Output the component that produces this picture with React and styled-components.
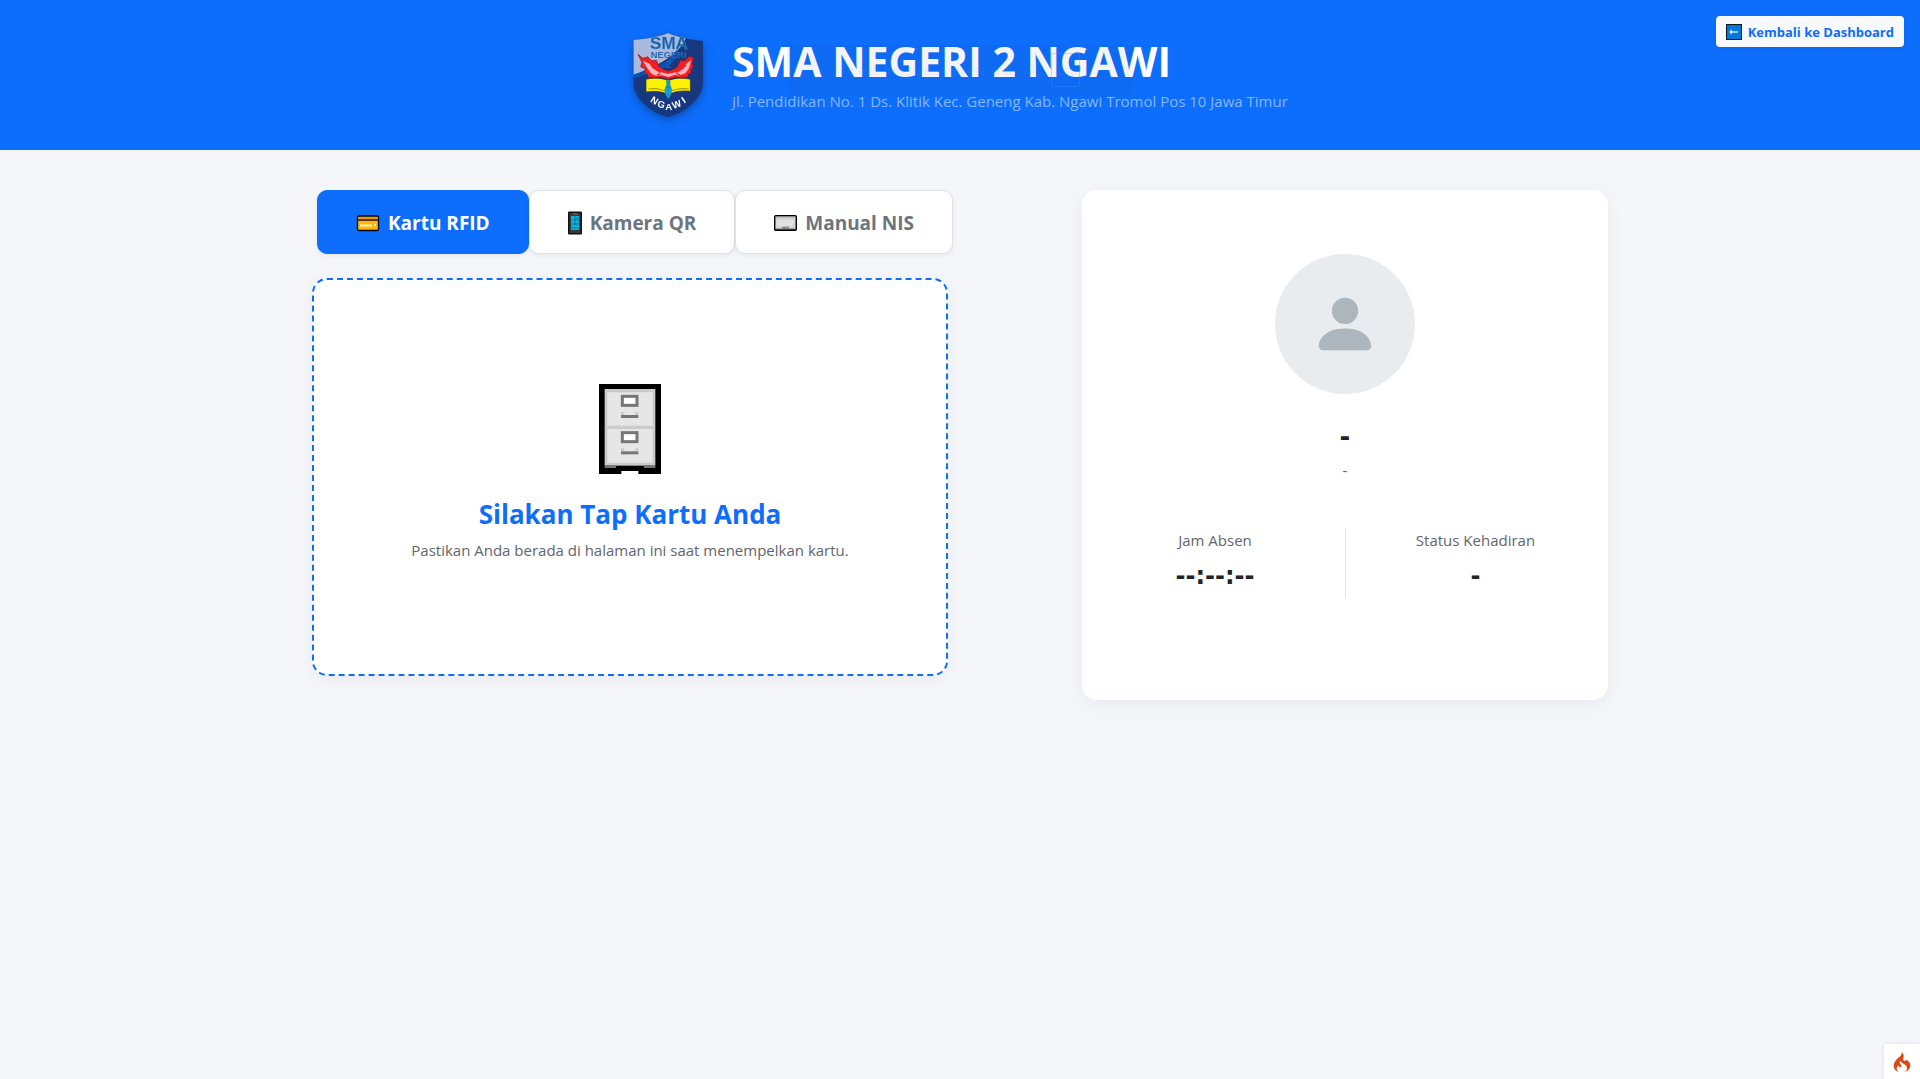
import React, { useState } from "react";
import styled, { createGlobalStyle, css } from "styled-components";
import { SiCodeigniter } from "react-icons/si";

const GlobalStyle = createGlobalStyle`
  *, *::before, *::after { box-sizing: border-box; }
  body {
    margin: 0;
    background: #f4f6f9;
    color: #212529;
    font-family: "Segoe UI", "Open Sans", "Noto Sans", sans-serif;
    font-size: 15px;
    line-height: 24px;
  }
  h1, h2, h3, p, dl, dt, dd { margin: 0; }
  svg { display: block; flex: none; }
`;

const Header = styled.header`
  position: relative;
  display: grid;
  grid-template-columns: 1fr auto 1fr;
  align-items: center;
  min-height: 150px;
  padding: 16px;
  background: #0d6efd;
  color: #fff;
`;

const Brand = styled.div`
  grid-column: 2;
  display: flex;
  align-items: center;
  gap: 20px;
`;

const BrandText = styled.div`
  min-width: 566px;
`;

const SchoolName = styled.h1`
  margin-bottom: 4px;
  font-size: 41px;
  line-height: 48px;
  font-weight: 700;
`;

const Address = styled.p`
  color: #86b7fe;
`;

const BackLink = styled.a`
  justify-self: end;
  align-self: start;
  display: flex;
  align-items: center;
  gap: 6px;
  height: 31px;
  padding: 0 10px;
  border-radius: 4px;
  background: #f8f9fa;
  color: #0d6efd;
  font-size: 13px;
  font-weight: 700;
  text-decoration: none;
  box-shadow: 0 2px 4px rgba(0, 0, 0, 0.08);
`;

const FullscreenHint = styled.div`
  position: absolute;
  top: 45px;
  left: 50%;
  transform: translateX(-50%);
  display: flex;
  align-items: center;
  justify-content: center;
  gap: 8px;
  width: 346px;
  height: 50px;
  background: rgba(30, 30, 30, 0.05);
  color: rgba(70, 150, 255, 0.15);
  font-size: 13px;
  pointer-events: none;
  white-space: nowrap;
`;

const KeyCap = styled.kbd`
  padding: 4px;
  border: 1px solid rgba(80, 150, 255, 0.3);
  border-radius: 2px;
  font: inherit;
`;

const Main = styled.main`
  display: grid;
  grid-template-columns: repeat(12, minmax(0, 1fr));
  gap: 24px;
  align-items: start;
  max-width: 1320px;
  margin: 0 auto;
  padding: 40px 12px;
`;

const ScanColumn = styled.div`
  grid-column: 1 / span 6;
  @media (max-width: 1100px) {
    grid-column: 1 / -1;
  }
`;

const Tabs = styled.div`
  display: flex;
  margin: 0 -5px 24px 5px;
`;

const Tab = styled.button`
  flex: 1 1 auto;
  display: flex;
  align-items: center;
  justify-content: center;
  gap: 8px;
  height: 64px;
  padding: 2px 16px 0;
  border: 1px solid #dee2e6;
  border-radius: 10px;
  background: #fff;
  color: #6c757d;
  font-family: inherit;
  font-size: 19px;
  font-weight: 700;
  cursor: pointer;
  box-shadow: 0 2px 5px rgba(0, 0, 0, 0.06);
  ${(p) =>
    p.$active &&
    css`
      border-color: #0d6efd;
      background: #0d6efd;
      color: #fff;
    `}
`;

const ScanPanel = styled.section`
  display: flex;
  flex-direction: column;
  align-items: center;
  padding: 104px 24px 112px;
  border: 2px dashed #0d6efd;
  border-radius: 15px;
  background: #fff;
  text-align: center;
  box-shadow: 0 4px 15px rgba(0, 0, 0, 0.05);
`;

const ScanTitle = styled.h2`
  margin: 23px 0 7px;
  color: #0d6efd;
  font-size: 26px;
  line-height: 34px;
  font-weight: 700;
`;

const Muted = styled.p`
  color: #5f666d;
`;

const ResultCard = styled.section`
  grid-column: 8 / span 5;
  display: flex;
  flex-direction: column;
  align-items: center;
  min-height: 510px;
  padding: 64px 0;
  border-radius: 15px;
  background: #fff;
  text-align: center;
  box-shadow: 0 5px 20px rgba(0, 0, 0, 0.05);
  @media (max-width: 1100px) {
    grid-column: 1 / -1;
  }
`;

const Avatar = styled.div`
  display: grid;
  place-items: center;
  width: 140px;
  height: 140px;
  margin-bottom: 26px;
  border-radius: 50%;
  background: #e9ecef;
  color: #adb5bd;
`;

const StudentName = styled.h3`
  margin-bottom: 4px;
  font-family: "DejaVu Sans", sans-serif;
  font-size: 26px;
  line-height: 34px;
  font-weight: 700;
`;

const Stats = styled.dl`
  display: grid;
  grid-template-columns: 1fr 1fr;
  width: 100%;
  max-width: 520px;
  margin-top: 46px;
`;

const Stat = styled.div`
  height: 70px;
  & + & { border-left: 1px solid #dee2e6; }
`;

const StatLabel = styled.dt`
  color: #5f666d;
`;

const StatValue = styled.dd`
  margin-top: 10px;
  font-family: "DejaVu Sans", sans-serif;
  font-size: 24px;
  line-height: 29px;
  font-weight: 700;
`;

const DebugButton = styled.button`
  position: fixed;
  right: 0;
  bottom: 0;
  display: grid;
  place-items: center;
  width: 36px;
  height: 35px;
  padding: 0;
  border: 0;
  background: #fff;
  color: #dd4814;
  cursor: pointer;
  box-shadow: 0 0 4px rgba(0, 0, 0, 0.1);
`;

const LogoSvg = styled.svg`
  filter: drop-shadow(0 3px 4px rgba(0, 0, 0, 0.3));
`;

const ARC_LETTERS = [
  { char: "N", x: 128, y: 250, turn: 32 },
  { char: "G", x: 151, y: 263, turn: 17 },
  { char: "A", x: 176, y: 269, turn: 0 },
  { char: "W", x: 203, y: 262, turn: -20 },
  { char: "I", x: 226, y: 248, turn: -34 },
];

function SchoolLogo() {
  return (
    <LogoSvg width="90" height="90" viewBox="36 30 270 270" role="img" aria-label="Logo SMA Negeri 2 Ngawi">
      <defs>
        <clipPath id="shield">
          <path d="M174 39C205 53 245 60 279 63V190C279 235 220 283 174 291C128 283 70 235 70 190V60C105 57 145 51 174 39Z" />
        </clipPath>
      </defs>
      <g clipPath="url(#shield)">
        <rect x="60" y="30" width="230" height="270" fill="#17387f" />
        <path d="M60 30H234C226 70 205 118 60 168Z" fill="#abb9dc" />
        <path d="M70 164C130 145 180 130 199 90L207 98C190 143 130 160 70 174Z" fill="#0b51b8" />
      </g>
      <g fontFamily="Liberation Sans, Arial, sans-serif" fontWeight="700" textAnchor="middle">
        <text x="177" y="88" fontSize="51" fill="#0d62a8" stroke="#5f8fc6" strokeWidth="1">SMA</text>
        <text x="176" y="115" fontSize="28" fill="#2a68b4">NEGERI</text>
        <text x="176" y="143" fontSize="33" fill="#1961bd">2</text>
        {ARC_LETTERS.map(({ char, x, y, turn }) => (
          <text key={char} fontSize="29" fill="#fff" transform={`translate(${x} ${y}) rotate(${turn})`}>
            {char}
          </text>
        ))}
      </g>
      <path d="M108 178C130 172 158 174 175 182C192 174 218 172 241 178V214C215 211 196 213 175 224C155 213 132 212 108 216Z" fill="#fff200" stroke="#3b3a20" strokeWidth="2" />
      <path d="M115 207Q150 202 174 218Q200 202 236 207" fill="none" stroke="#665f17" strokeWidth="2" />
      <path d="M84 103L99 115L113 110L125 122L139 121L148 140L162 149L175 153L188 149L202 140L211 121L224 122L237 109L252 113L246 128L250 142L243 146L244 158L236 162L233 172L215 174L198 171L175 178L152 171L132 174L114 172L112 162L104 158L106 147L92 140L96 127Z" fill="#ee2024" stroke="#7f1625" strokeWidth="2" />
      <path d="M99 123L119 131L130 147L150 156L175 162L200 156L219 147L229 131L244 121L236 146L226 160L206 167L195 164L175 171L154 165L140 168L124 161L112 145Z" fill="#ffb2ba" />
      <path d="M122 135L140 150L151 158M229 135L211 150L199 158M140 166L151 161M212 166L199 161" stroke="#ed2028" strokeWidth="4" fill="none" />
      <path d="M169 183Q175 175 181 183L180 193L186 209L181 227L175 237L169 227L164 209L170 193Z" fill="#10a9dd" stroke="#087497" strokeWidth="1" />
      <path d="M175 183V229M168 205L175 199L182 205" stroke="#087baa" strokeWidth="2" fill="none" />
    </LogoSvg>
  );
}

function BackIcon() {
  return (
    <svg width="16" height="16" viewBox="0 0 16 16" aria-hidden="true">
      <rect width="16" height="16" fill="#101820" />
      <rect x="1" y="1" width="14" height="14" fill="#0078d7" />
      <path d="M4 8H12M6 6L4 8L6 10" stroke="#c5e4fa" strokeWidth="1.3" fill="none" />
    </svg>
  );
}

function CardIcon() {
  return (
    <svg width="24" height="24" viewBox="0 0 24 24" aria-hidden="true">
      <rect x="1.5" y="5" width="21" height="14.5" rx="1.5" fill="#ffb900" stroke="#000" strokeWidth="1.3" />
      <path d="M2 6H22V8H2Z" fill="#e59a00" />
      <path d="M2 8H22V10H2Z" fill="#5d3425" />
      <path d="M4 14.5H16M18 14H20" stroke="#fff3cf" strokeWidth="2" />
    </svg>
  );
}

function PhoneIcon() {
  return (
    <svg width="14" height="24" viewBox="0 0 14 24" aria-hidden="true">
      <rect y="0.5" width="14" height="23" rx="1" fill="#111" />
      <rect x="1.5" y="2" width="11" height="20" fill="#3a3a3a" />
      <rect x="3" y="5" width="8" height="14" fill="#00b7e6" />
      <path d="M3 9H11M7 5V14M3 13H11M3 17H11M8 7H11" stroke="#12566b" strokeWidth="0.7" />
      <path d="M5 3H9" stroke="#777" />
    </svg>
  );
}

function KeyboardIcon() {
  return (
    <svg width="23" height="24" viewBox="0 0 23 24" aria-hidden="true">
      <rect x="0.7" y="4.7" width="21.6" height="14.6" rx="1" fill="#d6d6d6" stroke="#000" strokeWidth="1.4" />
      <path d="M1.5 6H21.5" stroke="#a2a2a2" />
      <path d="M1 18.4H22" stroke="#333" strokeWidth="1.4" />
      <path d="M3 10H20M3 12H20M4 14H19" stroke="#f7f7f7" strokeWidth="1.2" strokeDasharray="1.4 0.7" />
      <rect x="8" y="15.7" width="7" height="2.5" fill="#888" />
    </svg>
  );
}

function CabinetIcon() {
  return (
    <svg width="62" height="90" viewBox="0 0 186 270" aria-hidden="true">
      <path d="M0 0H186V270H118V261H67V270H0Z" fill="#000" />
      <rect x="17" y="15" width="152" height="230" fill="#cbcbcb" />
      <path d="M25 25H161V125H25ZM25 135H161V236H25Z" fill="#e6e6e6" />
      <path d="M17 244H51V252H17ZM135 244H169V252H135Z" fill="#767676" />
      {[0, 109].map((y) => (
        <g key={y}>
          <rect x="70" y={37 + y} width="44" height="27" fill="#fff" stroke="#767676" strokeWidth="9" />
          <path d={`M66 ${84 + y}H76V${93 + y}H66ZM109 ${84 + y}H118V${93 + y}H109Z`} fill="#cbcbcb" />
          <rect x="66" y={93 + y} width="52" height="9" fill="#767676" />
        </g>
      ))}
    </svg>
  );
}

function PersonIcon() {
  return (
    <svg width="70" height="70" viewBox="0 0 16 16" fill="currentColor" aria-hidden="true">
      <path d="M3 14s-1 0-1-1 1-4 6-4 6 3 6 4-1 1-1 1zm5-6a3 3 0 1 0 0-6 3 3 0 0 0 0 6" />
    </svg>
  );
}

const METHODS = [
  { id: "rfid", label: "Kartu RFID", Icon: CardIcon },
  { id: "qr", label: "Kamera QR", Icon: PhoneIcon },
  { id: "nis", label: "Manual NIS", Icon: KeyboardIcon },
];

export default function App() {
  const [method, setMethod] = useState("rfid");
  return (
    <>
      <GlobalStyle />
      <Header>
        <Brand>
          <SchoolLogo />
          <BrandText>
            <SchoolName>SMA NEGERI 2 NGAWI</SchoolName>
            <Address>Jl. Pendidikan No. 1 Ds. Klitik Kec. Geneng Kab. Ngawi Tromol Pos 10 Jawa Timur</Address>
          </BrandText>
        </Brand>
        <BackLink href="#dashboard">
          <BackIcon />
          Kembali ke Dashboard
        </BackLink>
        <FullscreenHint aria-hidden="true">
          To exit full screen, press and hold <KeyCap>Esc</KeyCap>
        </FullscreenHint>
      </Header>
      <Main>
        <ScanColumn>
          <Tabs role="tablist">
            {METHODS.map(({ id, label, Icon }) => (
              <Tab
                key={id}
                type="button"
                role="tab"
                aria-selected={method === id}
                $active={method === id}
                onClick={() => setMethod(id)}
              >
                <Icon />
                {label}
              </Tab>
            ))}
          </Tabs>
          <ScanPanel>
            <CabinetIcon />
            <ScanTitle>Silakan Tap Kartu Anda</ScanTitle>
            <Muted>Pastikan Anda berada di halaman ini saat menempelkan kartu.</Muted>
          </ScanPanel>
        </ScanColumn>
        <ResultCard>
          <Avatar>
            <PersonIcon />
          </Avatar>
          <StudentName>-</StudentName>
          <Muted>-</Muted>
          <Stats>
            <Stat>
              <StatLabel>Jam Absen</StatLabel>
              <StatValue>--:--:--</StatValue>
            </Stat>
            <Stat>
              <StatLabel>Status Kehadiran</StatLabel>
              <StatValue>-</StatValue>
            </Stat>
          </Stats>
        </ResultCard>
      </Main>
      <DebugButton type="button" aria-label="Debug toolbar">
        <SiCodeigniter size={20} />
      </DebugButton>
    </>
  );
}
